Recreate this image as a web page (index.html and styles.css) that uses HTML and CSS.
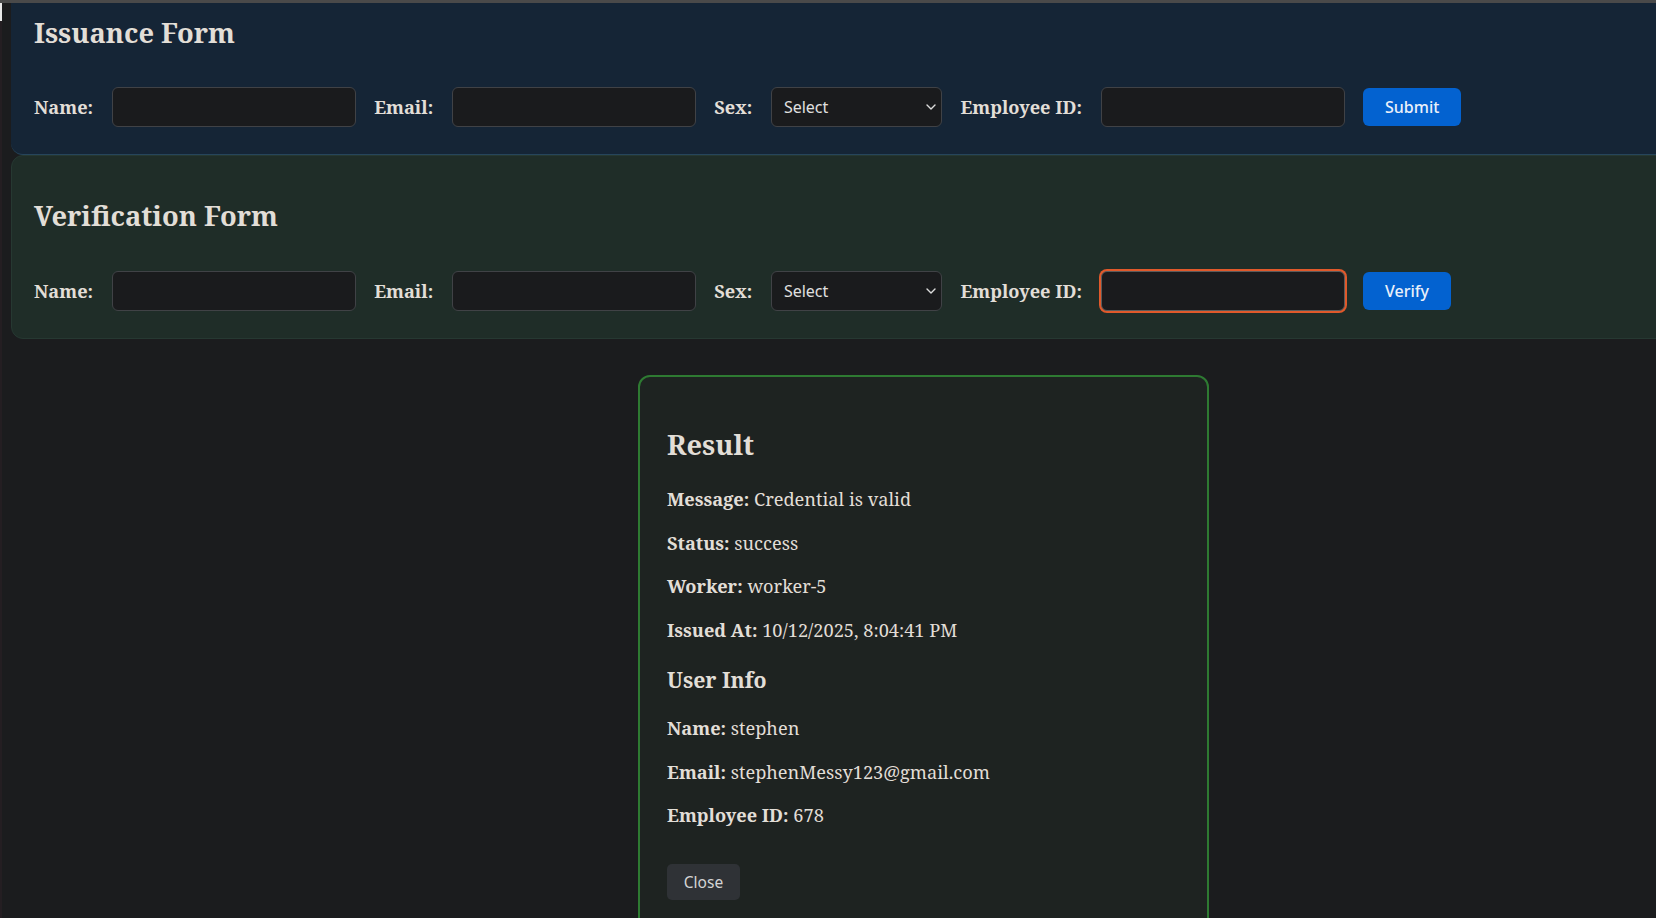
FILE: index.html
```html
<!DOCTYPE html>
<html lang="en">
<head>
<meta charset="utf-8">
<title>Credential Forms</title>
<link rel="stylesheet" href="styles.css">
</head>
<body>
<div class="topbar"></div>
<div class="edge"></div>
<div class="cursor"></div>
<main class="page">
  <section class="panel panel-issue">
    <h2 class="panel-title">Issuance Form</h2>
    <form class="row">
      <label class="lbl">Name:</label>
      <input class="field" type="text">
      <label class="lbl">Email:</label>
      <input class="field" type="text">
      <label class="lbl">Sex:</label>
      <div class="select-wrap">
        <select class="select"><option>Select</option></select>
        <svg class="chev" width="10" height="6" viewBox="0 0 10 6"><path d="M1 1l4 4 4-4" fill="none" stroke="#dcdcdc" stroke-width="1.4" stroke-linecap="round" stroke-linejoin="round"/></svg>
      </div>
      <label class="lbl">Employee ID:</label>
      <input class="field" type="text">
      <button class="btn" type="button">Submit</button>
    </form>
  </section>
  <section class="panel panel-verify">
    <h2 class="panel-title">Verification Form</h2>
    <form class="row">
      <label class="lbl">Name:</label>
      <input class="field" type="text">
      <label class="lbl">Email:</label>
      <input class="field" type="text">
      <label class="lbl">Sex:</label>
      <div class="select-wrap">
        <select class="select"><option>Select</option></select>
        <svg class="chev" width="10" height="6" viewBox="0 0 10 6"><path d="M1 1l4 4 4-4" fill="none" stroke="#dcdcdc" stroke-width="1.4" stroke-linecap="round" stroke-linejoin="round"/></svg>
      </div>
      <label class="lbl">Employee ID:</label>
      <input class="field field-focus" type="text">
      <button class="btn" type="button">Verify</button>
    </form>
  </section>
  <section class="result">
    <h2 class="result-title">Result</h2>
    <p><b>Message:</b> Credential is valid</p>
    <p><b>Status:</b> success</p>
    <p><b>Worker:</b> worker-5</p>
    <p><b>Issued At:</b> 10/12/2025, 8:04:41 PM</p>
    <h3 class="sub-title">User Info</h3>
    <p><b>Name:</b> stephen</p>
    <p><b>Email:</b> stephenMessy123@gmail.com</p>
    <p><b>Employee ID:</b> 678</p>
    <div class="close-row"><button class="close" type="button">Close</button></div>
  </section>
</main>
</body>
</html>
```

FILE: styles.css
```css
html, body {
  margin: 0;
  padding: 0;
  background: #1b1c1e;
  overflow: hidden;
}
body {
  font-family: "Noto Serif", "Liberation Serif", serif;
  font-size: 18.2px;
  color: #e2ded7;
}
.topbar {
  position: fixed;
  top: 0;
  left: 0;
  right: 0;
  height: 3px;
  background: #4a4a4a;
  z-index: 5;
}
.edge {
  position: fixed;
  top: 3px;
  left: 0;
  bottom: 0;
  width: 2px;
  background: #241e22;
  z-index: 4;
}
.cursor {
  position: fixed;
  top: 3px;
  left: 0;
  width: 2px;
  height: 18px;
  background: #e8e8e8;
  z-index: 6;
}
.page {
  width: 1825px;
  padding-left: 11px;
}
.panel {
  box-sizing: border-box;
  width: 1825px;
  padding: 42px 23px 27px;
  border-radius: 12px;
}
.panel-issue {
  padding-top: 15px;
  background: #152536;
  border-bottom: 1px solid #26455b;
  border-top-left-radius: 0;
  border-top-right-radius: 0;
}
.panel-issue .panel-title {
  margin-bottom: 36px;
}
.panel-verify {
  padding-left: 22px;
  background: #1f2d28;
  border: 1px solid #263832;
}
.panel-title {
  margin: 0 0 37px;
  font-size: 27.3px;
  line-height: 36px;
  font-weight: bold;
}
.row {
  display: flex;
  align-items: center;
  gap: 18.5px;
  margin: 0;
}
.lbl {
  font-weight: bold;
  font-size: 18.2px;
  white-space: nowrap;
}
.field {
  box-sizing: border-box;
  width: 244px;
  height: 40px;
  background: #1a1b1d;
  border: 1px solid #404246;
  border-radius: 6px;
  color: #e0e0e0;
  padding: 0 10px;
  outline: none;
}
.field-focus {
  border-color: #5b5b5b;
  box-shadow: 0 0 0 2px #e0592b;
}
.select-wrap {
  position: relative;
  width: 171px;
  height: 40px;
}
.select {
  appearance: none;
  -webkit-appearance: none;
  box-sizing: border-box;
  width: 100%;
  height: 40px;
  background: #1a1b1d;
  border: 1px solid #404246;
  border-radius: 6px;
  color: #e0e0e0;
  font-family: "Noto Sans", sans-serif;
  font-size: 16px;
  padding: 0 12px;
}
.chev {
  position: absolute;
  right: 6px;
  top: 17px;
}
.btn {
  height: 38px;
  padding: 0 22px;
  background: #0362d0;
  color: #eaf0fa;
  border: none;
  border-radius: 6px;
  font-family: "Noto Sans", sans-serif;
  font-size: 16px;
  font-weight: 500;
}
.result {
  box-sizing: border-box;
  width: 571px;
  margin: 36px auto 0;
  padding: 26px 27px 40px;
  background: #1e2321;
  border: 2px solid #2e7a32;
  border-radius: 12px;
}
.result-title {
  margin: 24px 0 24px;
  font-size: 27.3px;
  line-height: 36px;
}
.result p {
  margin: 0 0 19.2px;
  line-height: 24.4px;
}
.sub-title {
  margin: 24px 0 22px;
  font-size: 21.3px;
  line-height: 28px;
}
.close-row {
  padding-top: 17.4px;
}
.close {
  width: 73px;
  height: 36px;
  background: #2f3236;
  color: #d4d4d4;
  border: none;
  border-radius: 5px;
  font-family: "Noto Sans", sans-serif;
  font-size: 15.5px;
}
```
